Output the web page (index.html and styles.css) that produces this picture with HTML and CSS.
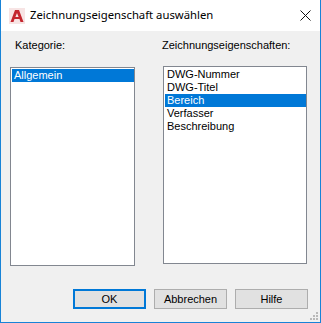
FILE: index.html
```html
<!doctype html>
<html>
<head>
<meta charset="UTF-8">
<title>Zeichnungseigenschaft auswählen</title>
<link rel="stylesheet" href="styles.css">
</head>
<body>
<div class="window">
  <div class="titlebar">
    <svg class="app_icon" width="16" height="16" viewBox="0 0 16 16">
      <rect x="0" y="0" width="16" height="16" fill="#f7e4e4"/>
      <polygon points="6,2 10,2 14.5,14 11.5,14 10.5,11 5.5,11 4.5,14 1.5,14" fill="#c4262e"/>
      <polygon points="8,5 9.6,9 6.4,9" fill="#f7e4e4"/>
    </svg>
    <span class="title">Zeichnungseigenschaft auswählen</span>
    <svg class="close" width="11" height="11" viewBox="0 0 11 11">
      <path d="M0.5 0.5 L10.5 10.5 M10.5 0.5 L0.5 10.5" stroke="#111" stroke-width="1" fill="none"/>
    </svg>
  </div>
  <div class="content">
    <div class="columns">
      <div class="col col_left">
        <div class="label">Kategorie:</div>
        <div class="listbox">
          <div class="item selected">Allgemein</div>
        </div>
      </div>
      <div class="col col_right">
        <div class="label">Zeichnungseigenschaften:</div>
        <div class="listbox">
          <div class="item">DWG-Nummer</div>
          <div class="item">DWG-Titel</div>
          <div class="item selected">Bereich</div>
          <div class="item">Verfasser</div>
          <div class="item">Beschreibung</div>
        </div>
      </div>
    </div>
    <div class="buttons">
      <div class="btn btn_default">OK</div>
      <div class="btn">Abbrechen</div>
      <div class="btn">Hilfe</div>
    </div>
    <svg class="grip" width="8" height="8" viewBox="0 0 8 8">
      <rect x="6" y="0" width="2" height="2" fill="#b8b8b8"/>
      <rect x="3" y="3" width="2" height="2" fill="#b8b8b8"/>
      <rect x="6" y="3" width="2" height="2" fill="#b8b8b8"/>
      <rect x="0" y="6" width="2" height="2" fill="#b8b8b8"/>
      <rect x="3" y="6" width="2" height="2" fill="#b8b8b8"/>
      <rect x="6" y="6" width="2" height="2" fill="#b8b8b8"/>
    </svg>
  </div>
</div>
</body>
</html>
```

FILE: styles.css
```css
body {
    margin: 0;
}
.window {
    width: 321px;
    height: 323px;
    box-sizing: border-box;
    border: 1px solid #1883d7;
    border-top: none;
    background: #f0f0f0;
    display: flex;
    flex-direction: column;
    position: relative;
    font-family: "Liberation Sans", Arial, sans-serif;
    font-size: 11px;
    color: #000;
}
.titlebar {
    height: 31px;
    flex: none;
    background: #fff;
    display: flex;
    align-items: center;
    padding-left: 8px;
}
.app_icon {
    flex: none;
}
.title {
    margin-left: 5px;
    font-family: "Noto Sans", sans-serif;
    font-size: 11.3px;
    line-height: 16px;
    padding-bottom: 1px;
    color: #000;
}
.close {
    margin-left: auto;
    margin-right: 9px;
}
.content {
    flex: 1;
    display: flex;
    flex-direction: column;
    padding: 8px 12px 0 9px;
}
.columns {
    display: flex;
    gap: 28px;
}
.col_left {
    width: 125px;
}
.col_right {
    width: 144px;
}
.label {
    height: 13px;
    line-height: 13px;
    white-space: nowrap;
}
.col_left .label {
    padding-left: 5px;
    margin-bottom: 15px;
}
.col_right .label {
    margin-left: -1px;
    margin-bottom: 14px;
}
.listbox {
    box-sizing: border-box;
    background: #fff;
    border: 1px solid #828790;
    padding: 1px 0 1px 1px;
}
.col_left .listbox {
    height: 199px;
}
.col_right .listbox {
    height: 198px;
}
.item {
    height: 13px;
    line-height: 13px;
    padding-left: 2px;
    white-space: nowrap;
}
.selected {
    background: #0078d7;
    color: #fff;
}
.buttons {
    margin-top: auto;
    margin-bottom: 13px;
    display: flex;
    justify-content: flex-end;
    gap: 8px;
}
.btn {
    box-sizing: border-box;
    width: 73px;
    height: 20px;
    line-height: 18px;
    text-align: center;
    background: #e1e1e1;
    border: 1px solid #adadad;
}
.btn_default {
    border: 2px solid #0078d7;
    line-height: 16px;
}
.grip {
    position: absolute;
    right: 2px;
    bottom: 2px;
}
```
